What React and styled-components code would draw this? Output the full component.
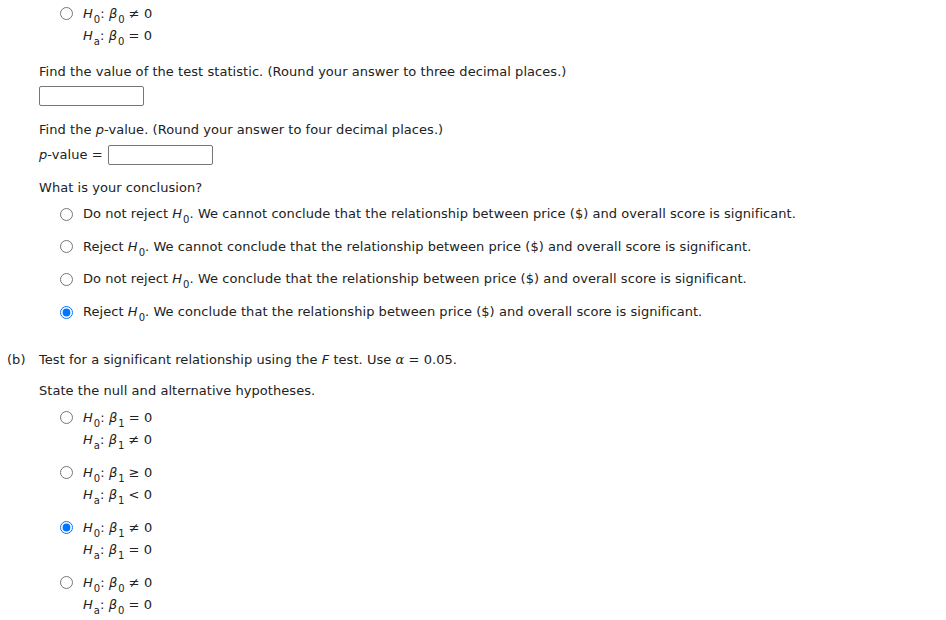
import React from 'react'
import styled, { createGlobalStyle } from 'styled-components'

const GlobalStyle = createGlobalStyle`
  body {
    margin: 0;
    background: #fff;
    color: #222;
    font-family: Verdana, "DejaVu Sans", sans-serif;
    font-size: 13px;
    letter-spacing: 0.05px;
  }
`

const hypoTop = { h0: ['0', '≠'], ha: ['0', '='] }

const partB = [
  { sub: '1', h0: '=', ha: '≠', checked: false },
  { sub: '1', h0: '≥', ha: '<', checked: false },
  { sub: '1', h0: '≠', ha: '=', checked: true },
  { sub: '0', h0: '≠', ha: '=', checked: false },
]

const conclusions = [
  { reject: false, not: 'cannot ', checked: false },
  { reject: true, not: 'cannot ', checked: false },
  { reject: false, not: '', checked: false },
  { reject: true, not: '', checked: true },
]

const H = ({ s }) => (
  <>
    <Var>H</Var>
    <Sub>{s}</Sub>
  </>
)

const Hyp = ({ h, sub, op }) => (
  <HypLine>
    <H s={h} />: <Var>β</Var>
    <Sub>{sub}</Sub> {op} 0
  </HypLine>
)

const HypGroup = ({ sub, h0, ha, checked, name }) => (
  <GroupRow>
    <Radio type="radio" name={name} defaultChecked={checked} />
    <div>
      <Hyp h="0" sub={sub} op={h0} />
      <Hyp h="a" sub={sub} op={ha} />
    </div>
  </GroupRow>
)

const App = () => {
  return (
    <Page>
      <GlobalStyle />
      <Section>
        <span />
        <Body>
          <TopGroup>
            <HypGroup sub={hypoTop.h0[0]} h0={hypoTop.h0[1]} ha={hypoTop.ha[1]} name="a-hyp" />
          </TopGroup>
          <Para $mt={17}>
            Find the value of the test statistic. (Round your answer to three decimal places.)
          </Para>
          <AnswerBox $mt={6} />
          <Para $mt={16}>
            Find the <Var>p</Var>-value. (Round your answer to four decimal places.)
          </Para>
          <InlineRow>
            <span>
              <Var>p</Var>-value =
            </span>
            <AnswerBox />
          </InlineRow>
          <Para $mt={15}>What is your conclusion?</Para>
          <ChoiceList>
            {conclusions.map((c, i) => (
              <ChoiceRow key={i}>
                <Radio type="radio" name="concl" defaultChecked={c.checked} />
                <span>
                  {c.reject ? 'Reject ' : 'Do not reject '}
                  <H s="0" />. We {c.not}conclude that the relationship between price ($) and overall
                  score is significant.
                </span>
              </ChoiceRow>
            ))}
          </ChoiceList>
        </Body>
      </Section>

      <Section $mt={32}>
        <PartLabel>(b)</PartLabel>
        <Body>
          <Para>
            Test for a significant relationship using the <Var>F</Var> test. Use <Alpha>α</Alpha> = 0.05.
          </Para>
          <Para $mt={15}>State the null and alternative hypotheses.</Para>
          <GroupList>
            {partB.map((g, i) => (
              <HypGroup key={i} {...g} name="b-hyp" />
            ))}
          </GroupList>
        </Body>
      </Section>
    </Page>
  )
}

export default App

const Page = styled.div`
  padding: 3px 0 0 7px;
`

const Section = styled.div`
  display: grid;
  grid-template-columns: 32px 1fr;
  margin-top: ${(p) => p.$mt || 0}px;
`

const PartLabel = styled.div`
  line-height: 16px;
`

const Body = styled.div`
  display: flex;
  flex-direction: column;
  align-items: flex-start;
`

const Para = styled.div`
  line-height: 16px;
  margin-top: ${(p) => p.$mt || 0}px;
`

const Var = styled.i`
  font-style: italic;
`

const Alpha = styled.i`
  font-family: "DejaVu Serif", serif;
  font-style: italic;
`

const Sub = styled.sub`
  font-size: 10px;
  vertical-align: -5px;
  line-height: 0;
  margin-left: 1px;
`

const AnswerBox = styled.div`
  box-sizing: border-box;
  width: 105px;
  height: 20px;
  border: 1px solid #767676;
  border-radius: 2px;
  margin-top: ${(p) => p.$mt || 0}px;
`

const InlineRow = styled.div`
  display: flex;
  align-items: center;
  gap: 5px;
  margin-top: 7px;
  line-height: 16px;
`

const ChoiceList = styled.div`
  display: flex;
  flex-direction: column;
  gap: 16.7px;
  margin-top: 10px;
  padding-left: 21px;
`

const ChoiceRow = styled.label`
  display: flex;
  align-items: center;
  gap: 10px;
  line-height: 16px;
`

const Radio = styled.input`
  width: 13px;
  height: 13px;
  margin: 0;
  flex: none;
  accent-color: #0075ff;
`

const TopGroup = styled.div`
  padding-left: 21px;
`

const GroupList = styled.div`
  display: flex;
  flex-direction: column;
  gap: 11px;
  margin-top: 8px;
  padding-left: 21px;
`

const GroupRow = styled.label`
  display: flex;
  align-items: flex-start;
  gap: 10px;

  ${Radio} {
    margin-top: 4px;
  }
`

const HypLine = styled.div`
  line-height: 22px;
  white-space: pre;
`
